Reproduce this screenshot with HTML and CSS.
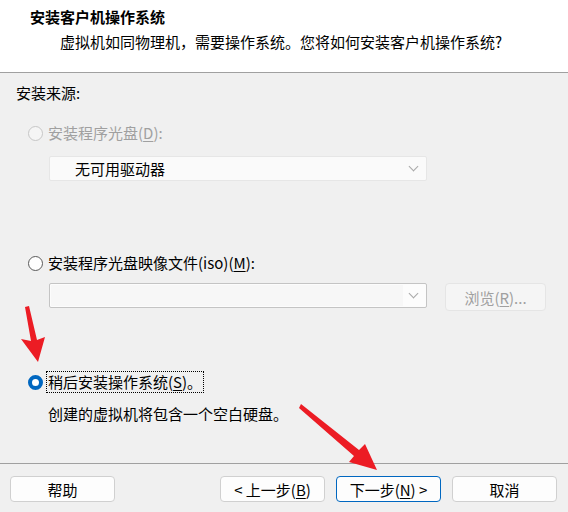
FILE: index.html
```html
<!DOCTYPE html>
<html lang="zh-CN">
<head>
    <meta charset="UTF-8">
    <title>新建虚拟机向导</title>
    <link rel="stylesheet" href="styles.css">
</head>
<body>
    <div class="window">
        <div class="header">
            <div class="title">安装客户机操作系统</div>
            <div class="subtitle">虚拟机如同物理机，需要操作系统。您将如何安装客户机操作系统?</div>
        </div>
        <div class="main">
            <div class="group-label">安装来源:</div>

            <div class="option disabled first">
                <span class="radio"></span>
                <span class="label">安装程序光盘(<u>D</u>):</span>
            </div>
            <div class="field">
                <div class="select disabled-select">
                    <span class="select-text">无可用驱动器</span>
                    <span class="chevron"></span>
                </div>
            </div>

            <div class="option second">
                <span class="radio"></span>
                <span class="label">安装程序光盘映像文件(iso)(<u>M</u>):</span>
            </div>
            <div class="field">
                <div class="select iso-select">
                    <span class="select-inner"></span>
                    <span class="chevron"></span>
                </div>
                <button class="browse" type="button">浏览(<u>R</u>)...</button>
            </div>

            <div class="option third">
                <span class="radio checked"></span>
                <span class="label focus">稍后安装操作系统(<u>S</u>)。</span>
            </div>
            <div class="desc">创建的虚拟机将包含一个空白硬盘。</div>
        </div>
        <div class="footer">
            <button class="btn" type="button">帮助</button>
            <div class="spacer"></div>
            <button class="btn" type="button">&lt; 上一步(<u>B</u>)</button>
            <button class="btn default" type="button">下一步(<u>N</u>) &gt;</button>
            <button class="btn" type="button">取消</button>
        </div>

        <!-- annotation arrows -->
        <svg class="arrows" width="568" height="512" viewBox="0 0 568 512">
            <polygon points="25,307 29,306 37,340 45,337 38,362 21,339 31,341" fill="#ec1c24"/>
            <polygon points="300,406 301,404 359,450 365,444 377,470 349,462 354,456 299,408" fill="#ec1c24"/>
        </svg>
    </div>
</body>
</html>
```

FILE: styles.css
```css
* {
    box-sizing: border-box;
}
body {
    margin: 0;
    font-family: "Noto Sans CJK SC", "Liberation Sans", sans-serif;
    font-size: 15px;
    color: #000;
    background: #f0f0f0;
}
.window {
    position: relative;
    width: 568px;
    height: 512px;
    overflow: hidden;
    background: #f0f0f0;
}
u {
    text-decoration: underline;
    text-underline-offset: 2px;
}
.header {
    height: 73px;
    background: #fff;
    border-bottom: 1px solid #a0a0a0;
    padding: 7px 0 0 30px;
}
.title {
    font-weight: bold;
    line-height: 20px;
}
.subtitle {
    line-height: 20px;
    margin-top: 5px;
    padding-left: 30px;
}
.main {
    height: 390px;
    padding: 10px 0 0 16px;
}
.group-label {
    line-height: 20px;
}
.option {
    display: flex;
    align-items: center;
    height: 20px;
    padding-left: 12px;
}
.option.first {
    margin-top: 20px;
}
.option.second {
    margin-top: 72px;
}
.option.third {
    margin-top: 61px;
}
.radio {
    width: 15px;
    height: 15px;
    border-radius: 50%;
    border: 1px solid #5a5a5a;
    background: #fff;
    margin-right: 5px;
    flex: none;
}
.disabled .radio {
    border-color: #c6c6c6;
    background: #f5f5f5;
}
.disabled .label {
    color: #a0a0a0;
}
.radio.checked {
    border: 4px solid #0067c0;
    background: #fff;
}
.label {
    line-height: 20px;
}
.label.focus {
    outline: 1px dotted #000;
    outline-offset: 0;
    margin-left: -1px;
    padding: 0 1px 0 1px;
}
.field {
    display: flex;
    align-items: flex-start;
    margin-top: 13px;
    padding-left: 33px;
}
.option.second + .field {
    margin-top: 10px;
}
.select {
    position: relative;
    display: flex;
    align-items: center;
    width: 378px;
    height: 25px;
}
.disabled-select {
    background: #fafafa;
    border: 1px solid #e6e6e6;
    border-radius: 2px;
}
.select-text {
    padding-left: 25px;
    flex: 1;
}
.iso-select {
    background: #fcfcfc;
    border: 1px solid #c4c4c4;
    border-radius: 2px;
    padding: 1px;
}
.select-inner {
    flex: 1;
    align-self: stretch;
    background: #f7f7f7;
    margin-right: 22px;
}
.chevron {
    position: absolute;
    right: 9px;
    top: 6px;
    width: 7px;
    height: 7px;
    border-right: 1px solid #a8a8a8;
    border-bottom: 1px solid #a8a8a8;
    transform: rotate(45deg);
}
.browse {
    margin-left: 18px;
    width: 101px;
    height: 28px;
    font: inherit;
    color: #a0a0a0;
    background: #f5f5f5;
    border: 1px solid #e5e5e5;
    border-radius: 4px;
}
.desc {
    line-height: 20px;
    margin-top: 12px;
    padding-left: 32px;
}
.footer {
    display: flex;
    border-top: 1px solid #a0a0a0;
    padding: 12px 11px 0 10px;
    gap: 11px;
}
.spacer {
    flex: 1;
}
.btn {
    width: 105px;
    height: 26px;
    font: inherit;
    color: #000;
    background: #fdfdfd;
    border: 1px solid #d0d0d0;
    border-radius: 4px;
    padding: 0;
}
.btn.default {
    border-color: #0067c0;
}
.arrows {
    position: absolute;
    left: 0;
    top: 0;
    pointer-events: none;
}
```
